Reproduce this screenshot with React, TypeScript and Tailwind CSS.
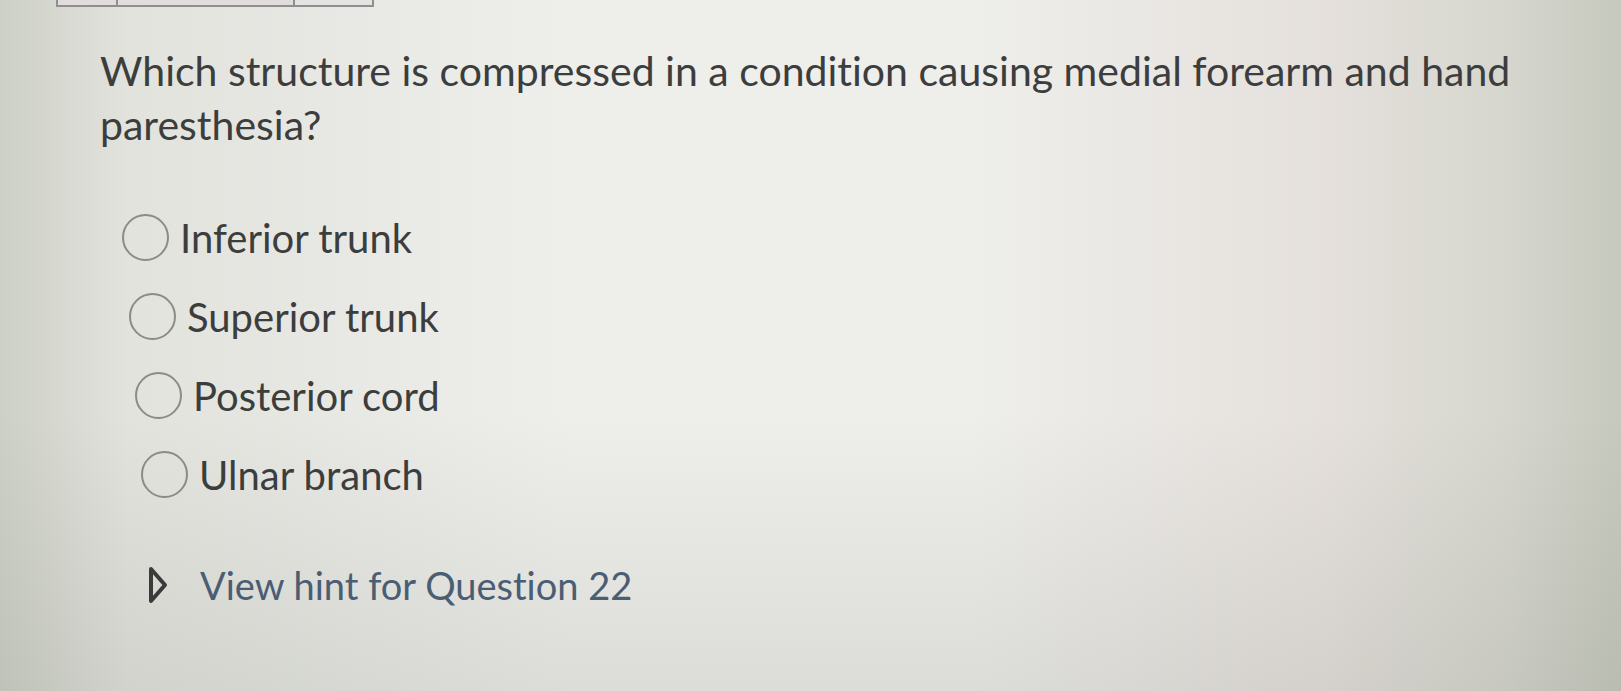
import React from "react";

const options = [
  { label: "Inferior trunk", shift: "ml-0" },
  { label: "Superior trunk", shift: "ml-[7px]" },
  { label: "Posterior cord", shift: "ml-[13px]" },
  { label: "Ulnar branch", shift: "ml-[19px]" },
];

const Radio: React.FC = () => (
  <span className="block h-[47px] w-[47px] shrink-0 rounded-full border-2 border-[#8a8c88]" />
);

const App: React.FC = () => {
  return (
    <main
      className="relative h-[691px] w-[1621px] overflow-hidden bg-[linear-gradient(180deg,rgba(0,0,0,0)_60%,rgba(90,95,85,0.12)_100%),linear-gradient(90deg,#cdd0c7_0%,#e2e3dd_8%,#eeeeeb_35%,#eeeeeb_60%,#e5e0dc_82%,#d6d6ce_93%,#c6c9be_100%)] text-[#3c3d3d] [font-variant-ligatures:none]"
      style={{ fontFamily: "Lato, 'Open Sans', sans-serif" }}
    >
      {/* tail of the table above the question */}
      <div className="ml-[56px] flex h-[7px] w-[318px] border-x-2 border-b-2 border-[#8f8f8f] bg-[#e2dcdc]">
        <div className="w-[60px] border-r-2 border-[#8f8f8f]" />
        <div className="w-[177px] border-r-2 border-[#8f8f8f]" />
        <div className="flex-1 bg-[#e4e4e2]" />
      </div>

      <section className="pl-[100px] pt-[37px]">
        <p className="max-w-[1460px] text-[41px] leading-[54px]">
          Which structure is compressed in a condition causing medial forearm
          and hand paresthesia?
        </p>

        <ul className="mt-[62px] flex flex-col gap-[32px] pl-[22px]">
          {options.map((option, index) => (
            <li key={index} className={`flex items-center gap-[11px] ${option.shift}`}>
              <Radio />
              <span className="text-[40px] leading-[46px]">{option.label}</span>
            </li>
          ))}
        </ul>

        <div className="ml-[48px] mt-[64px] flex items-center gap-[32px]">
          <svg width="20" height="38" viewBox="0 0 20 38" className="shrink-0">
            <path
              d="M3 3 L17 19 L3 35 Z"
              fill="none"
              stroke="#3a3b3a"
              strokeWidth="4"
              strokeLinejoin="round"
            />
          </svg>
          <span className="text-[38px] leading-[46px] text-[#4a5d73]">
            View hint for Question 22
          </span>
        </div>
      </section>
    </main>
  );
};

export default App;
